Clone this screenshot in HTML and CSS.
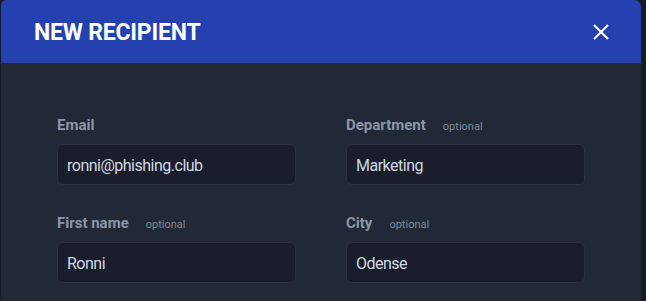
FILE: index.html
```html
<!DOCTYPE html>
<html lang="en">
<head>
<meta charset="utf-8">
<title>New recipient</title>
<link rel="stylesheet" href="styles.css">
</head>
<body>
<div class="modal">
  <header class="modal-header">
    <h1 class="modal-title">NEW RECIPIENT</h1>
    <button class="close-btn" aria-label="Close">
      <svg width="16" height="16" viewBox="0 0 16 16"><path d="M1 1 L15 15 M15 1 L1 15" stroke="#ffffff" stroke-width="2" fill="none"/></svg>
    </button>
  </header>
  <div class="modal-body">
    <div class="field">
      <div class="label-row"><span class="label">Email</span></div>
      <div class="input">ronni@phishing.club</div>
    </div>
    <div class="field">
      <div class="label-row"><span class="label">Department</span><span class="optional">optional</span></div>
      <div class="input">Marketing</div>
    </div>
    <div class="field">
      <div class="label-row"><span class="label">First name</span><span class="optional">optional</span></div>
      <div class="input">Ronni</div>
    </div>
    <div class="field">
      <div class="label-row"><span class="label">City</span><span class="optional">optional</span></div>
      <div class="input">Odense</div>
    </div>
  </div>
</div>
</body>
</html>
```

FILE: styles.css
```css
html, body {
  margin: 0;
  padding: 0;
  height: 100%;
  overflow: hidden;
}
body {
  background: #161b25;
  font-family: Roboto, "Noto Sans", sans-serif;
}
.modal {
  margin-left: 1px;
  width: 640px;
  height: 301px;
  background: #212836;
  border-radius: 5px 7px 0 0;
  overflow: hidden;
}
.modal-header {
  height: 63px;
  background: #2541b0;
  display: flex;
  align-items: center;
  justify-content: space-between;
  padding: 0 32px 0 33px;
  box-sizing: border-box;
}
.modal-title {
  margin: 3px 0 0 0;
  color: #ffffff;
  font-size: 23px;
  font-weight: 700;
  letter-spacing: -0.2px;
  line-height: 30px;
}
.close-btn {
  background: none;
  border: 0;
  padding: 0;
  width: 16px;
  height: 16px;
  display: flex;
  cursor: pointer;
}
.modal-body {
  padding: 52px 56px 0 56px;
  display: grid;
  grid-template-columns: 239px 239px;
  column-gap: 50px;
  row-gap: 28px;
}
.label-row {
  display: flex;
  align-items: baseline;
  gap: 17px;
  height: 20px;
  margin-bottom: 9px;
}
.label {
  color: #8a97aa;
  font-size: 15px;
  font-weight: 700;
  line-height: 20px;
}
.optional {
  color: #7c889b;
  font-size: 11px;
  line-height: 20px;
}
.input {
  height: 41px;
  box-sizing: border-box;
  background: #1a1e2c;
  border: 1px solid #2b3243;
  border-radius: 6px;
  padding: 2px 9px 0 9px;
  color: #d0d8e3;
  font-size: 16px;
  letter-spacing: -0.5px;
  line-height: 37px;
}
```
